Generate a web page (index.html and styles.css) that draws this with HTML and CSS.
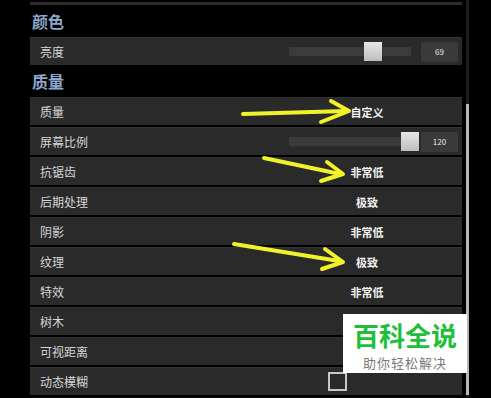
FILE: index.html
```html
<!DOCTYPE html>
<html lang="zh">
<head>
    <meta charset="UTF-8">
    <title>画面设置</title>
    <link rel="stylesheet" href="styles.css">
</head>
<body>
    <div class="screen">
        <div class="panel">
            <div class="top-bar"></div>

            <h2 class="section">颜色</h2>
            <div class="row">
                <span class="label">亮度</span>
                <div class="slider">
                    <div class="track"><div class="thumb" style="left: 69%"></div></div>
                    <div class="value-box">69</div>
                </div>
            </div>

            <h2 class="section">质量</h2>
            <div class="row"><span class="label">质量</span><span class="value">自定义</span></div>
            <div class="row">
                <span class="label">屏幕比例</span>
                <div class="slider">
                    <div class="track"><div class="thumb" style="left: 99%"></div></div>
                    <div class="value-box">120</div>
                </div>
            </div>
            <div class="row"><span class="label">抗锯齿</span><span class="value">非常低</span></div>
            <div class="row"><span class="label">后期处理</span><span class="value">极致</span></div>
            <div class="row"><span class="label">阴影</span><span class="value">非常低</span></div>
            <div class="row"><span class="label">纹理</span><span class="value">极致</span></div>
            <div class="row"><span class="label">特效</span><span class="value">非常低</span></div>
            <div class="row"><span class="label">树木</span></div>
            <div class="row"><span class="label">可视距离</span></div>
            <div class="row"><span class="label">动态模糊</span><span class="checkbox"></span></div>
        </div>
        <div class="scrollbar"><div class="scroll-thumb"></div></div>

        <!-- hand drawn arrows over the list -->
        <svg class="arrows" width="491" height="398" viewBox="0 0 491 398">
            <g fill="none" stroke="#f2f22a" stroke-width="4" stroke-linecap="round" stroke-linejoin="round">
                <path d="M243 114 L346 111"/>
                <path d="M331 101 L349 111 L321 122"/>
                <path d="M264 158 L340 174"/>
                <path d="M327 162 L343 174 L321 181"/>
                <path d="M234 244 L339 261"/>
                <path d="M325 249 L343 262 L322 269"/>
            </g>
        </svg>

        <div class="watermark">
            <div class="wm-title">百科全说</div>
            <div class="wm-sub">助你轻松解决</div>
        </div>
    </div>
</body>
</html>
```

FILE: styles.css
```css
body {
    margin: 0;
    background-color: #000;
    font-family: "Noto Sans CJK SC", "Noto Sans", sans-serif;
    color: #ddd;
}

.screen {
    position: relative;
    width: 491px;
    height: 398px;
    overflow: hidden;
    display: flex;
}

.panel {
    width: 432px;
    margin-left: 30px;
}

.top-bar {
    height: 3px;
    margin-top: 2px;
    background-color: #2c2c2c;
}

.section {
    height: 32px;
    margin: 0;
    padding-left: 2px;
    font-size: 16px;
    font-weight: bold;
    line-height: 32px;
    color: #8da9cc;
}

.row {
    height: 28px;
    box-sizing: border-box;
    background-color: #2a2a2a;
    border-top: 1px solid #333;
    display: grid;
    grid-template-columns: 1fr 60px 65px;
    grid-template-rows: 1fr;
    align-items: center;
}

.row + .row {
    margin-top: 2px;
}

.label {
    grid-column: 1;
    grid-row: 1;
    padding-left: 10px;
    font-size: 12px;
    color: #d6d6d6;
}

.value {
    grid-column: 2;
    grid-row: 1;
    text-align: center;
    font-size: 11px;
    font-weight: bold;
    color: #f2f2f2;
}

.slider {
    grid-column: 2 / 4;
    grid-row: 1;
    justify-self: end;
    display: flex;
    align-items: center;
    gap: 10px;
    padding-right: 4px;
}

.track {
    position: relative;
    width: 122px;
    height: 9px;
    background-color: #3b3b3b;
}

.thumb {
    position: absolute;
    top: -5px;
    width: 18px;
    height: 19px;
    margin-left: -9px;
    background: linear-gradient(#e6e6e6, #bdbdbd);
}

.value-box {
    width: 37px;
    height: 20px;
    background-color: #3a3a3a;
    font-size: 8px;
    line-height: 20px;
    text-align: center;
    color: #e8e8e8;
}

.checkbox {
    grid-column: 2;
    grid-row: 1;
    justify-self: center;
    width: 15px;
    height: 15px;
    margin-right: 60px;
    border: 2px solid #c8c8c8;
}

.scrollbar {
    width: 3px;
    margin-left: 4px;
    background-color: #1c1c1c;
}

.scroll-thumb {
    height: 291px;
    margin-top: 104px;
    background-color: #b8b8b8;
}

.arrows {
    position: absolute;
    left: 0;
    top: 0;
}

.watermark {
    position: absolute;
    left: 343px;
    top: 314px;
    width: 124px;
    height: 59px;
    background-color: #fff;
    text-align: center;
}

.wm-title {
    margin-top: 2px;
    font-size: 26px;
    font-weight: bold;
    line-height: 38px;
    color: #1fbf3b;
}

.wm-sub {
    margin-top: -1px;
    font-size: 13px;
    line-height: 19px;
    color: #7a7a7a;
    letter-spacing: 1px;
}
```
